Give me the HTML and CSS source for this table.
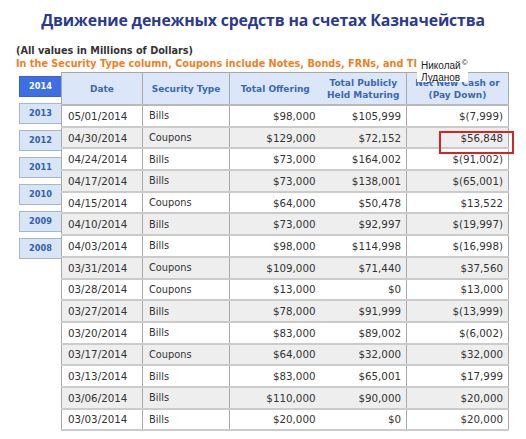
FILE: index.html
```html
<!DOCTYPE html>
<html lang="ru">
<head>
<meta charset="utf-8">
<title>Движение денежных средств</title>
<link rel="stylesheet" href="styles.css">
</head>
<body>
<h1 class="title">Движение денежных средств на счетах Казначейства</h1>
<p class="note">(All values in Millions of Dollars)</p>
<p class="note orange">In the Security Type column, Coupons include Notes, Bonds, FRNs, and TIPS.</p>
<div class="main">
  <ul class="years">
    <li class="year active">2014</li>
    <li class="year">2013</li>
    <li class="year">2012</li>
    <li class="year">2011</li>
    <li class="year">2010</li>
    <li class="year">2009</li>
    <li class="year">2008</li>
  </ul>
  <table class="data">
    <colgroup>
      <col class="c-date"><col class="c-type"><col class="c-off"><col class="c-held"><col class="c-net">
    </colgroup>
    <thead>
      <tr>
        <th>Date</th>
        <th>Security Type</th>
        <th>Total Offering</th>
        <th class="nol">Total Publicly<br>Held Maturing</th>
        <th>Net New Cash or<br>(Pay Down)</th>
      </tr>
    </thead>
    <tbody>
      <tr><td class="date">05/01/2014</td><td class="type">Bills</td><td class="num">$98,000</td><td class="num nol">$105,999</td><td class="num">$(7,999)</td></tr>
      <tr><td class="date">04/30/2014</td><td class="type">Coupons</td><td class="num">$129,000</td><td class="num nol">$72,152</td><td class="num">$56,848</td></tr>
      <tr><td class="date">04/24/2014</td><td class="type">Bills</td><td class="num">$73,000</td><td class="num nol">$164,002</td><td class="num">$(91,002)</td></tr>
      <tr><td class="date">04/17/2014</td><td class="type">Bills</td><td class="num">$73,000</td><td class="num nol">$138,001</td><td class="num">$(65,001)</td></tr>
      <tr><td class="date">04/15/2014</td><td class="type">Coupons</td><td class="num">$64,000</td><td class="num nol">$50,478</td><td class="num">$13,522</td></tr>
      <tr><td class="date">04/10/2014</td><td class="type">Bills</td><td class="num">$73,000</td><td class="num nol">$92,997</td><td class="num">$(19,997)</td></tr>
      <tr><td class="date">04/03/2014</td><td class="type">Bills</td><td class="num">$98,000</td><td class="num nol">$114,998</td><td class="num">$(16,998)</td></tr>
      <tr><td class="date">03/31/2014</td><td class="type">Coupons</td><td class="num">$109,000</td><td class="num nol">$71,440</td><td class="num">$37,560</td></tr>
      <tr><td class="date">03/28/2014</td><td class="type">Coupons</td><td class="num">$13,000</td><td class="num nol">$0</td><td class="num">$13,000</td></tr>
      <tr><td class="date">03/27/2014</td><td class="type">Bills</td><td class="num">$78,000</td><td class="num nol">$91,999</td><td class="num">$(13,999)</td></tr>
      <tr><td class="date">03/20/2014</td><td class="type">Bills</td><td class="num">$83,000</td><td class="num nol">$89,002</td><td class="num">$(6,002)</td></tr>
      <tr><td class="date">03/17/2014</td><td class="type">Coupons</td><td class="num">$64,000</td><td class="num nol">$32,000</td><td class="num">$32,000</td></tr>
      <tr><td class="date">03/13/2014</td><td class="type">Bills</td><td class="num">$83,000</td><td class="num nol">$65,001</td><td class="num">$17,999</td></tr>
      <tr><td class="date">03/06/2014</td><td class="type">Bills</td><td class="num">$110,000</td><td class="num nol">$90,000</td><td class="num">$20,000</td></tr>
      <tr><td class="date">03/03/2014</td><td class="type">Bills</td><td class="num">$20,000</td><td class="num nol">$0</td><td class="num">$20,000</td></tr>
    </tbody>
  </table>
</div>
<div class="credit">Николай<span class="copy">©</span><br>Луданов</div>
<div class="mark"></div>
</body>
</html>
```
FILE: styles.css
```css
html, body {
  margin: 0;
  padding: 0;
  background: #ffffff;
}
body {
  position: relative;
  width: 526px;
  height: 439px;
  overflow: hidden;
  font-family: "DejaVu Sans", Verdana, sans-serif;
  color: #333333;
}
.title {
  margin: 0;
  padding-top: 8px;
  height: 30px;
  text-align: center;
  font-family: "Open Sans", "Noto Sans", sans-serif;
  font-weight: 700;
  font-size: 15.8px;
  line-height: 24px;
  color: #2b3990;
  letter-spacing: -0.15px;
}
.note {
  margin: 0 0 0 16px;
  font-weight: bold;
  font-size: 9.7px;
  line-height: 13px;
  color: #333333;
  white-space: nowrap;
}
.note:first-of-type {
  margin-top: 6px;
}
.orange {
  color: #f07f1f;
}
.main {
  display: flex;
  align-items: flex-start;
  margin: 2px 0 0 19px;
}
.years {
  list-style: none;
  margin: 4px 0 0 0;
  padding: 0;
  width: 42px;
  display: flex;
  flex-direction: column;
  gap: 6px;
}
.year {
  box-sizing: border-box;
  height: 21px;
  line-height: 19px;
  text-align: center;
  font-weight: bold;
  font-size: 8.2px;
  color: #3560ad;
  background: #d8e5f7;
  border: 1px solid #a9b7cc;
  border-right: none;
}
.year.active {
  color: #ffffff;
  background: #3d6ee3;
  border-color: #3463d2;
}
.data {
  border-collapse: collapse;
  width: 447px;
  table-layout: fixed;
  border: 1px solid #a9a9a9;
}
.c-date { width: 81px; }
.c-type { width: 87px; }
.c-off { width: 91px; }
.c-held { width: 86px; }
.c-net { width: 102px; }
.data th {
  height: 31px;
  padding: 0;
  background: #dbe7f8;
  color: #3b67b5;
  font-size: 9px;
  font-weight: bold;
  line-height: 12px;
  text-align: center;
  vertical-align: middle;
  border-left: 1px solid #a9a9a9;
  border-bottom: 2px solid #b9b9b9;
}
.data td {
  height: 19.7px;
  padding: 0;
  font-size: 10.3px;
  color: #333333;
  border-left: 1px solid #a9a9a9;
  border-bottom: 2px solid #cbcbcb;
  white-space: nowrap;
}
.data th.nol,
.data td.nol {
  border-left: none;
}
.data tbody tr:nth-child(even) td {
  background: #eeeeee;
}
.date {
  padding-left: 6px !important;
}
.type {
  padding-left: 6px !important;
  font-size: 9.8px !important;
}
.num {
  text-align: right;
  padding-right: 5px !important;
}
.credit {
  position: absolute;
  left: 417px;
  top: 55px;
  width: 51px;
  height: 27px;
  box-sizing: border-box;
  padding: 2px 0 0 4px;
  background: #ffffff;
  font-family: "Liberation Sans", Arial, sans-serif;
  font-size: 10px;
  line-height: 12px;
  color: #222222;
}
.copy {
  font-size: 8px;
  vertical-align: 4px;
  margin-left: 1px;
}
.mark {
  position: absolute;
  left: 439px;
  top: 131px;
  width: 75px;
  height: 23px;
  box-sizing: border-box;
  border: 2px solid #d62424;
}
```
